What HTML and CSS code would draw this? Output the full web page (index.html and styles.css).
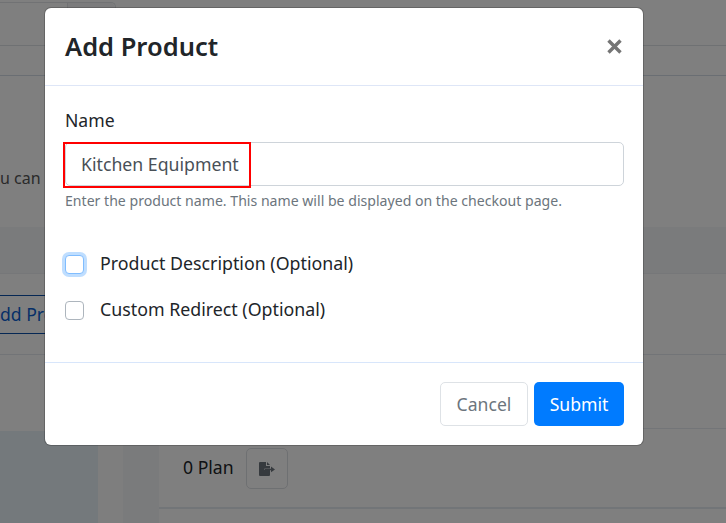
FILE: index.html
```html
<!DOCTYPE html>
<html lang="en">
<head>
<meta charset="utf-8">
<title>Add Product</title>
<link rel="stylesheet" href="styles.css">
</head>
<body>
<div class="page">
  <div class="top-strip"><div class="top-tabs"><div class="tab-a"></div><div class="tab-b"></div></div></div>
  <div class="sub-strip"></div>
  <div class="intro">u can c</div>
  <div class="band"></div>
  <div class="add-row"><span class="add-btn">dd Pro</span></div>
  <div class="lower">
    <div class="side-blue"></div>
    <div class="side-plain"></div>
    <div class="side-dark"></div>
    <div class="main-col">
      <div class="plan-row">
        <span class="plan-text">0 Plan</span>
        <span class="plan-btn">
          <svg class="plan-icon" viewBox="0 0 16 14" width="16" height="14"><path d="M0 1a1 1 0 0 1 1-1h6v4h4v2.500H5.500v1.500H11V13a1 1 0 0 1-1 1H1a1 1 0 0 1-1-1z"/><path d="M8 0l3 3H8z"/><path d="M6 6.700h6V4.500l4 2.900-4 2.900V8.200H6z"/></svg>
        </span>
      </div>
    </div>
  </div>
</div>
<div class="backdrop"></div>
<div class="modal">
  <header class="modal-head">
    <h1 class="modal-title">Add Product</h1>
    <svg class="close" viewBox="0 0 15 15" width="15" height="15"><path d="M1.500 1.500l12 12M13.500 1.500l-12 12"/></svg>
  </header>
  <div class="modal-body">
    <label class="field-label">Name</label>
    <div class="input-wrap">
      <div class="input">Kitchen Equipment</div>
      <div class="highlight"></div>
    </div>
    <p class="hint">Enter the product name. This name will be displayed on the checkout page.</p>
    <div class="check-row first"><span class="check focused"></span><span class="check-label">Product Description (Optional)</span></div>
    <div class="check-row"><span class="check"></span><span class="check-label">Custom Redirect (Optional)</span></div>
  </div>
  <footer class="modal-foot">
    <span class="btn cancel">Cancel</span>
    <span class="btn submit">Submit</span>
  </footer>
</div>
</body>
</html>
```
FILE: styles.css
```css
html, body { margin: 0; padding: 0; height: 100%; overflow: hidden; }
body { width: 726px; height: 523px; position: relative; background: #fff; font-family: "Noto Sans", "Open Sans", sans-serif; color: #212529; }
.page { height: 523px; overflow: hidden; background: #fff; }
.top-strip { height: 46px; box-sizing: border-box; padding-top: 2px; border-bottom: 1px solid #dee2e6; }
.top-tabs { width: 116px; height: 43px; display: flex; box-sizing: border-box; border-top: 1px solid #e2e5e9; border-right: 1px solid #e2e5e9; border-radius: 0 5px 0 0; }
.tab-a { width: 67px; border-right: 1px solid #e2e5e9; }
.tab-b { flex: 1; background: #f6f6f8; border-radius: 0 5px 0 0; }
.sub-strip { height: 30px; box-sizing: border-box; border-bottom: 1px solid #d5dde6; }
.intro { height: 151px; box-sizing: border-box; padding-top: 90px; font-size: 16px; line-height: 24px; color: #555; white-space: nowrap; }
.band { height: 47px; background: #f5f6f8; border-bottom: 1px solid #eceff2; box-sizing: border-box; }
.add-row { height: 81px; box-sizing: border-box; padding-top: 21px; border-bottom: 1px solid #e4e9ee; }
.add-btn { display: block; width: 60px; height: 39px; line-height: 37px; box-sizing: border-box; border-top: 1px solid #0a4fa8; border-bottom: 1px solid #0a4fa8; font-size: 17.6px; color: #0c5fd0; white-space: nowrap; overflow: hidden; }
.lower { height: 168px; display: flex; }
.side-blue { width: 98px; margin-top: 76px; background: #e9f2f9; }
.side-plain { width: 25px; margin-top: 76px; background: #fdfdfd; }
.side-dark { width: 36px; background: #f5f6f8; }
.main-col { flex: 1; }
.plan-row { margin-top: 73px; height: 81px; box-sizing: border-box; border-top: 1px solid #e6ebf0; border-bottom: 2px solid #e4eaf0; padding: 19px 0 0 24px; display: flex; align-items: flex-start; gap: 12px; font-size: 17.6px; line-height: 24px; }
.plan-text { margin-top: 7px; }
.plan-btn { width: 42px; height: 41px; box-sizing: border-box; border: 1px solid #dde0e4; border-radius: 5px; display: flex; align-items: center; justify-content: center; }
.plan-icon { fill: #6c757d; }
.backdrop { position: absolute; inset: 0; background: rgba(0, 0, 0, .5); }
.modal { position: absolute; left: 45px; top: 8px; width: 598px; height: 437px; box-sizing: border-box; background: #fff; border-radius: 6px; box-shadow: 0 0 0 1px rgba(0, 0, 0, .2); display: flex; flex-direction: column; }
.modal-head { height: 78px; box-sizing: border-box; border-bottom: 1px solid #dee6f7; display: flex; align-items: center; justify-content: space-between; padding: 0 21px 0 20px; flex: none; }
.modal-title { margin: 0 0 2px; font-size: 25.500px; font-weight: 600; line-height: 30px; color: #212529; }
.close { fill: none; stroke: #757575; stroke-width: 3.400; }
.modal-body { flex: 1; padding: 22px 19px 0 20px; }
.field-label { display: block; font-size: 17.6px; line-height: 24px; color: #212529; margin-bottom: 10px; }
.input-wrap { position: relative; height: 44px; }
.input { height: 44px; box-sizing: border-box; border: 1px solid #ced4da; border-radius: 5px; padding: 0 15px; font-size: 17.700px; line-height: 43px; color: #495057; }
.highlight { position: absolute; left: -2px; top: 0; width: 188px; height: 46px; box-sizing: border-box; border: 2px solid #f00; }
.hint { margin: 5px 0 0; font-size: 14.100px; line-height: 20px; color: #6c757d; white-space: nowrap; }
.check-row { display: flex; align-items: center; gap: 16px; height: 24px; margin-top: 22px; font-size: 17.800px; color: #212529; }
.check-row.first { margin-top: 41px; }
.check-label { margin-top: -2px; }
.check { width: 19px; height: 19px; box-sizing: border-box; background: #fff; border: 1px solid #adb5bd; border-radius: 4px; flex: none; }
.check.focused { border-color: #80bdff; box-shadow: 0 0 0 3px rgba(0, 123, 255, .25); }
.modal-foot { height: 83px; box-sizing: border-box; border-top: 1px solid #d8e6fb; display: flex; justify-content: flex-end; align-items: flex-start; gap: 6px; padding: 19px 19px 0 0; flex: none; }
.btn { height: 44px; box-sizing: border-box; border-radius: 5px; font-size: 17.6px; line-height: 42px; text-align: center; border: 1px solid transparent; }
.cancel { width: 88px; border-color: #dee2e6; color: #6c757d; }
.submit { width: 90px; background: #007bff; color: #fff; }
```
